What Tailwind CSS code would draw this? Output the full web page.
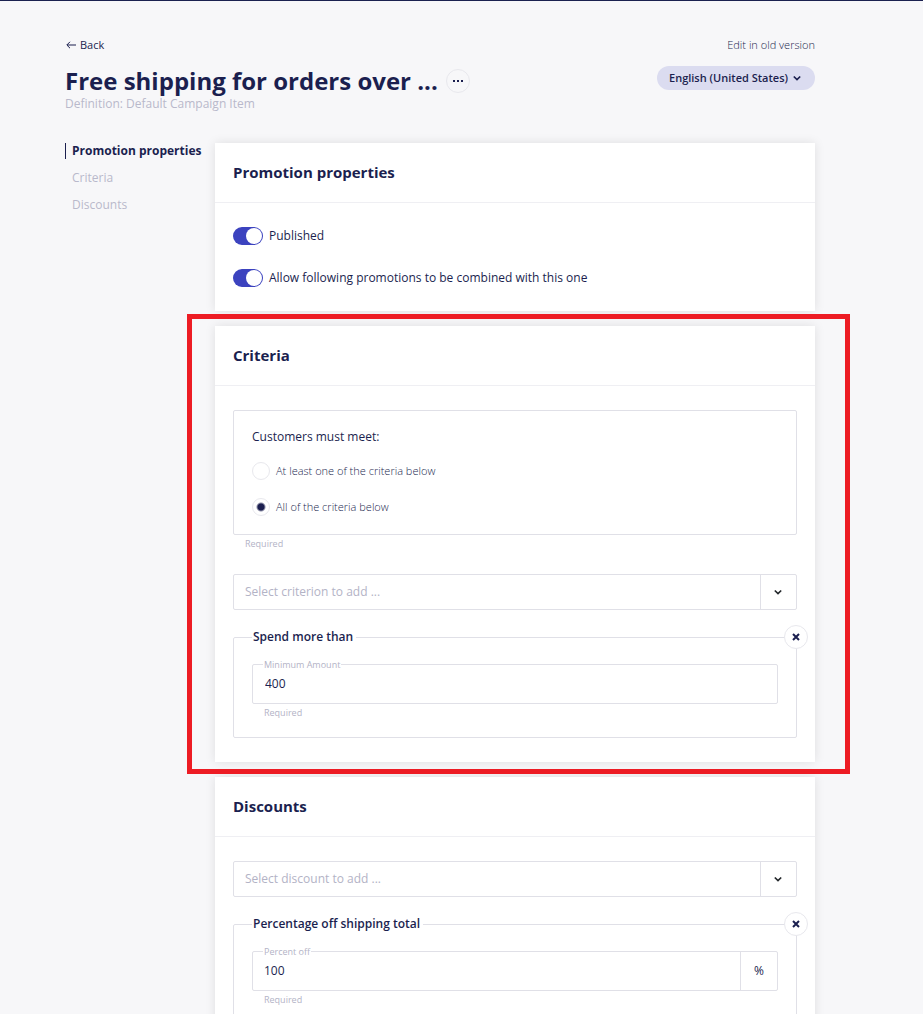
<!DOCTYPE html>
<html lang="en">
<head>
  <meta charset="UTF-8" />
  <meta name="viewport" content="width=device-width, initial-scale=1.0" />
  <title>Free shipping for orders over ...</title>
  <script src="https://cdn.jsdelivr.net/npm/@tailwindcss/browser@4"></script>
</head>
<body class="bg-[#f7f7f9] text-[#1b1f4f] font-['Open_Sans',sans-serif] text-[12px] leading-[18px] min-h-screen border-t border-[#1b2150] [scrollbar-width:none]">
  <div class="pl-[65px] pr-[108px] pt-[35px] pb-6">

    <!-- Page header -->
    <header>
      <div class="flex items-center justify-between text-[11px]">
        <a href="#" class="flex items-center gap-[3px]">
          <svg class="w-3 h-3" viewBox="0 0 12 12" fill="none" stroke="currentColor" stroke-width="1"><path d="M11 6H2M5 2.8L1.8 6L5 9.2" /></svg>
          Back
        </a>
        <a href="#" class="font-light">Edit in old version</a>
      </div>
      <div class="flex items-start justify-between mt-3">
        <div>
          <div class="flex items-center gap-2">
            <h1 class="text-[24px] leading-[30px] font-bold">Free shipping for orders over ...</h1>
            <button type="button" aria-label="More actions" class="flex items-center justify-center w-6 h-6 shrink-0 rounded-full border border-[#e8e8ed]">
              <svg class="w-3 h-3" viewBox="0 0 12 12" fill="currentColor"><path d="M1 5h2v2H1zM5 5h2v2H5zM9 5h2v2H9z" /></svg>
            </button>
          </div>
          <p class="leading-4 text-[#b9b9cb]">Definition: Default Campaign Item</p>
        </div>
        <button type="button" class="flex items-center gap-[3px] h-6 shrink-0 rounded-full bg-[#dbdcf0] px-3 text-[11px] font-semibold">
          English (United States)
          <svg class="w-3 h-3" viewBox="0 0 12 12" fill="none" stroke="currentColor" stroke-width="1.7"><path d="M2.8 4.5L6 7.5L9.2 4.5" /></svg>
        </button>
      </div>
    </header>

    <div class="flex mt-[31px]">
      <nav class="w-[150px] shrink-0 text-[#b9b9cb]">
        <ul class="flex flex-col gap-[11px]">
          <li><a href="#promotion" class="block leading-4 pl-[6px] border-l border-[#1b1f4f] text-[#1b1f4f] font-bold whitespace-nowrap">Promotion properties</a></li>
          <li><a href="#criteria" class="block leading-4 pl-[7px]">Criteria</a></li>
          <li><a href="#discounts" class="block leading-4 pl-[7px]">Discounts</a></li>
        </ul>
      </nav>

      <main class="flex-1 min-w-0 flex flex-col gap-[15px]">

        <!-- Promotion properties -->
        <section id="promotion" class="bg-white shadow-[0_0_10px_rgba(0,0,0,0.1)]">
          <h2 class="h-[60px] px-[18px] border-b border-[#efeff3] text-[15px] leading-[59px] font-bold">Promotion properties</h2>
          <div class="flex flex-col items-start gap-6 px-[18px] py-6">
            <label class="flex items-center gap-[6px]">
              <input type="checkbox" role="switch" checked class="peer sr-only" />
              <span class="flex items-center justify-end w-[30px] h-[18px] rounded-full bg-[#3c43bf] pr-px">
                <span class="w-4 h-4 rounded-full bg-white"></span>
              </span>
              Published
            </label>
            <label class="flex items-center gap-[6px]">
              <input type="checkbox" role="switch" checked class="peer sr-only" />
              <span class="flex items-center justify-end w-[30px] h-[18px] rounded-full bg-[#3c43bf] pr-px">
                <span class="w-4 h-4 rounded-full bg-white"></span>
              </span>
              Allow following promotions to be combined with this one
            </label>
          </div>
        </section>

        <!-- Criteria -->
        <section id="criteria" class="relative bg-white shadow-[0_0_10px_rgba(0,0,0,0.1)]">
          <div class="absolute -top-3 -bottom-3 -left-7 -right-[35px] border-5 border-[#ed1c24] pointer-events-none"></div>
          <h2 class="h-[60px] px-[18px] border-b border-[#efeff3] text-[15px] leading-[59px] font-bold">Criteria</h2>
          <div class="px-[18px] py-6">
            <div role="radiogroup" aria-labelledby="meet" class="border border-[#e0e0e7] rounded-xs px-[18px] pt-[17px] pb-[18px]">
              <p id="meet">Customers must meet:</p>
              <div class="flex flex-col items-start gap-[18px] mt-4 text-[11px] font-light">
                <label class="flex items-center gap-[6px]">
                  <input type="radio" name="match" class="appearance-none w-[18px] h-[18px] rounded-full border border-[#e8e8ed] bg-white checked:bg-[radial-gradient(circle,#1b1f4f_3px,white_5px)]" />
                  At least one of the criteria below
                </label>
                <label class="flex items-center gap-[6px]">
                  <input type="radio" name="match" checked class="appearance-none w-[18px] h-[18px] rounded-full border border-[#e8e8ed] bg-white checked:bg-[radial-gradient(circle,#1b1f4f_3px,white_5px)]" />
                  All of the criteria below
                </label>
              </div>
            </div>
            <p class="pl-3 text-[9px] text-[#b3b3c6]">Required</p>

            <div class="flex h-9 mt-[21px] border border-[#e0e0e7] rounded-xs">
              <input type="text" aria-label="Criterion" placeholder="Select criterion to add ..." class="flex-1 min-w-0 px-[11px] placeholder:text-[#b3b3c6] outline-none" />
              <button type="button" aria-label="Show criteria" class="flex items-center justify-center w-9 pr-0.5 border-l border-[#e0e0e7] text-[#23272b]">
                <svg class="w-3 h-3" viewBox="0 0 12 12" fill="none" stroke="currentColor" stroke-width="1.7"><path d="M2.8 4.5L6 7.5L9.2 4.5" /></svg>
              </button>
            </div>

            <div class="relative mt-[18px]">
              <fieldset class="border border-[#e0e0e7] rounded-xs px-[18px] pb-[15px]">
                <legend class="pl-px pr-[3px] font-semibold">Spend more than</legend>
                <div class="relative mt-[18px]">
                  <label for="amount" class="absolute -top-[7px] left-[11px] px-px bg-white text-[9px] leading-4 text-[#b3b3c6]">Minimum Amount</label>
                  <input id="amount" type="text" value="400" class="block w-full h-10 px-3 pb-0.5 border border-[#e0e0e7] rounded-xs outline-none" />
                </div>
                <p class="pl-3 text-[9px] text-[#b3b3c6]">Required</p>
              </fieldset>
              <button type="button" aria-label="Remove" class="absolute -top-[3px] -right-[11px] flex items-center justify-center w-6 h-6 rounded-full border border-[#e8e8ed] bg-white">
                <svg class="w-3 h-3" viewBox="0 0 12 12" fill="none" stroke="currentColor" stroke-width="2"><path d="M3 3L9 9M9 3L3 9" /></svg>
              </button>
            </div>
          </div>
        </section>

        <!-- Discounts -->
        <section id="discounts" class="bg-white shadow-[0_0_10px_rgba(0,0,0,0.1)]">
          <h2 class="h-[60px] px-[18px] border-b border-[#efeff3] text-[15px] leading-[59px] font-bold">Discounts</h2>
          <div class="px-[18px] py-6">
            <div class="flex h-9 border border-[#e0e0e7] rounded-xs">
              <input type="text" aria-label="Discount" placeholder="Select discount to add ..." class="flex-1 min-w-0 px-[11px] placeholder:text-[#b3b3c6] outline-none" />
              <button type="button" aria-label="Show discounts" class="flex items-center justify-center w-9 pr-0.5 border-l border-[#e0e0e7] text-[#23272b]">
                <svg class="w-3 h-3" viewBox="0 0 12 12" fill="none" stroke="currentColor" stroke-width="1.7"><path d="M2.8 4.5L6 7.5L9.2 4.5" /></svg>
              </button>
            </div>

            <div class="relative mt-[18px]">
              <fieldset class="border border-[#e0e0e7] rounded-xs px-[18px] pb-[15px]">
                <legend class="pl-px pr-[3px] font-semibold">Percentage off shipping total</legend>
                <div class="relative mt-[18px] flex h-10 border border-[#e0e0e7] rounded-xs">
                  <label for="percent" class="absolute -top-2 left-[10px] px-px bg-white text-[9px] leading-4 text-[#b3b3c6]">Percent off</label>
                  <input id="percent" type="text" value="100" class="flex-1 min-w-0 px-[11px] outline-none" />
                  <span class="flex items-center justify-center w-[37px] border-l border-[#e0e0e7]">%</span>
                </div>
                <p class="pl-3 text-[9px] text-[#b3b3c6]">Required</p>
              </fieldset>
              <button type="button" aria-label="Remove" class="absolute -top-[3px] -right-[11px] flex items-center justify-center w-6 h-6 rounded-full border border-[#e8e8ed] bg-white">
                <svg class="w-3 h-3" viewBox="0 0 12 12" fill="none" stroke="currentColor" stroke-width="2"><path d="M3 3L9 9M9 3L3 9" /></svg>
              </button>
            </div>
          </div>
        </section>

      </main>
    </div>
  </div>
</body>
</html>
